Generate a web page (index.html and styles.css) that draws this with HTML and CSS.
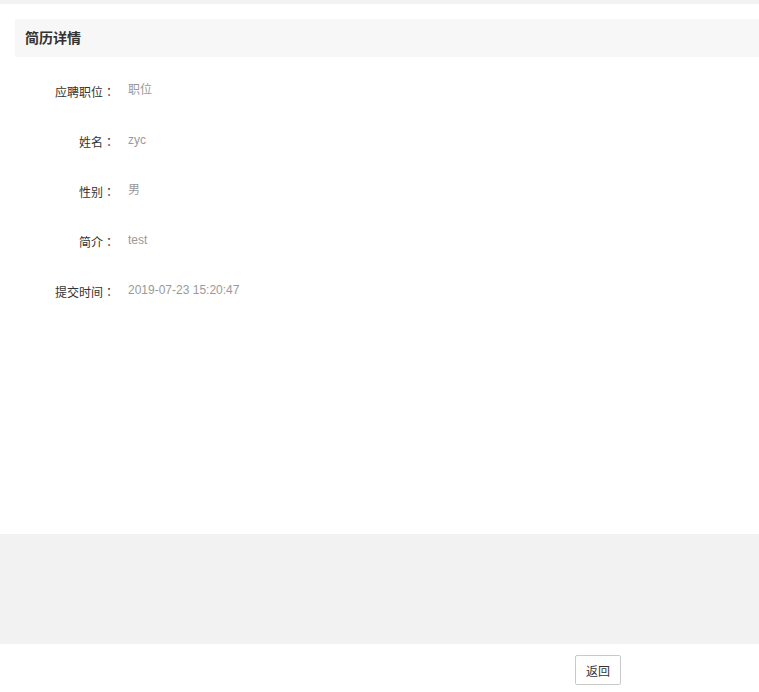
FILE: index.html
```html
<!DOCTYPE html>
<html lang="zh-CN">
<head>
<meta charset="utf-8">
<title>简历详情</title>
<link rel="stylesheet" href="styles.css">
</head>
<body>
<div class="page">
  <div class="content">
    <div class="panel-head">简历详情</div>
    <div class="form">
      <div class="row"><div class="label">应聘职位<span class="colon" lang="zh-TW">：</span></div><div class="value">职位</div></div>
      <div class="row"><div class="label">姓名<span class="colon" lang="zh-TW">：</span></div><div class="value">zyc</div></div>
      <div class="row"><div class="label">性别<span class="colon" lang="zh-TW">：</span></div><div class="value">男</div></div>
      <div class="row"><div class="label">简介<span class="colon" lang="zh-TW">：</span></div><div class="value">test</div></div>
      <div class="row"><div class="label">提交时间<span class="colon" lang="zh-TW">：</span></div><div class="value">2019-07-23 15:20:47</div></div>
    </div>
  </div>
  <div class="spacer"></div>
  <div class="footer">
    <button class="btn" type="button">返回</button>
  </div>
</div>
</body>
</html>
```
FILE: styles.css
```css
html, body {
  margin: 0;
  padding: 0;
}
body {
  background: #f2f2f2;
  font-family: "Liberation Sans", "Noto Sans CJK SC", sans-serif;
  font-size: 12px;
  color: #333;
  overflow: hidden;
}
.page {
  padding-top: 4px;
  height: 688px;
  display: flex;
  flex-direction: column;
}
.content {
  background: #fff;
  height: 530px;
  padding: 15px 0 0 15px;
  box-sizing: border-box;
}
.panel-head {
  height: 38px;
  line-height: 38px;
  background: #f7f7f7;
  padding-left: 10px;
  font-size: 14px;
  font-weight: bold;
  color: #333;
}
.form {
  padding-top: 23px;
  display: flex;
  flex-direction: column;
  gap: 30px;
}
.row {
  display: flex;
  line-height: 20px;
  height: 20px;
}
.label {
  width: 100px;
  text-align: right;
  color: #333;
  padding-top: 2px;
}
.colon {
  font-family: "Noto Sans CJK TC", sans-serif;
}
.value {
  margin-left: 13px;
  color: #999;
}
.spacer {
  height: 110px;
  background: #f2f2f2;
}
.footer {
  background: #fff;
  height: 48px;
  padding: 11px 0 0 575px;
  box-sizing: border-box;
}
.btn {
  height: 30px;
  width: 46px;
  padding: 0;
  border: 1px solid #c9c9c9;
  border-radius: 2px;
  background: #fff;
  color: #333;
  font-family: "Liberation Sans", "Noto Sans CJK SC", sans-serif;
  font-size: 12px;
  cursor: pointer;
}
```
